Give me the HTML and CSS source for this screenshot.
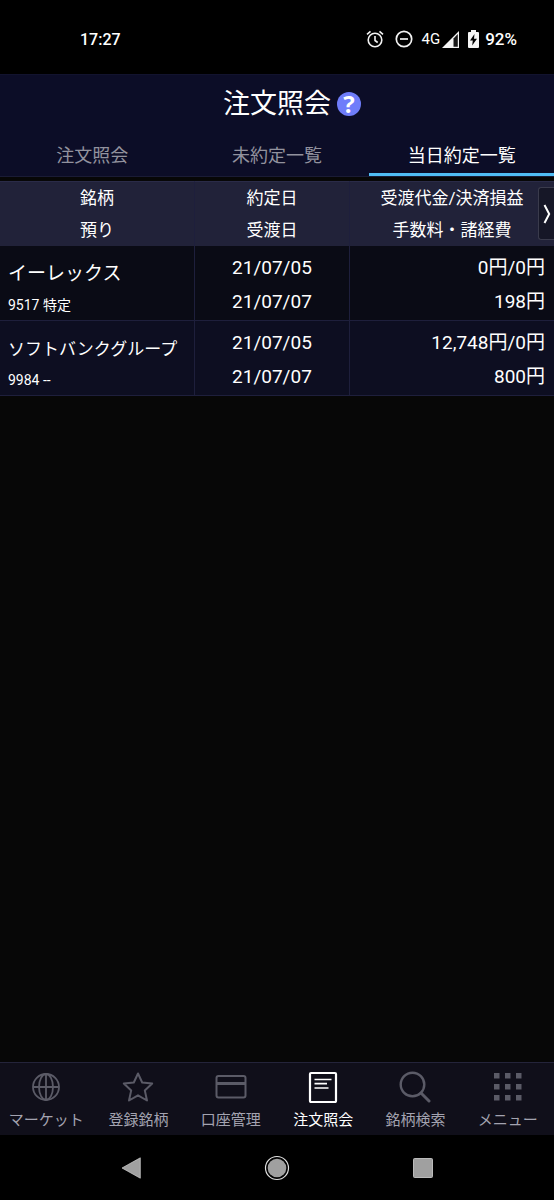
FILE: index.html
```html
<!DOCTYPE html>
<html lang="ja">
<head>
<meta charset="utf-8">
<meta name="viewport" content="width=device-width, initial-scale=1">
<title>注文照会</title>
<link rel="stylesheet" href="styles.css">
</head>
<body>
<div class="status-bar">
  <time class="status-time">17:27</time>
  <div class="status-icons">
    <svg class="icon-alarm" width="18" height="18" viewBox="0 0 18 18" fill="none" stroke="#f2f2f2" stroke-width="1.6"><circle cx="9" cy="10" r="6.8"/><path d="M9 6v4.500l2.700 2M1 4.300l3.500-3M17 4.300l-3.500-3"/></svg>
    <svg class="icon-dnd" width="18" height="18" viewBox="0 0 18 18" fill="none" stroke="#f2f2f2" stroke-width="1.700"><circle cx="9" cy="9" r="7.700"/><path d="M5 9h8"/></svg>
    <span class="network">4G</span>
    <svg class="icon-signal" width="17" height="17" viewBox="0 0 17 17"><path d="M0 17L17 0v17z" fill="#f5f5f5"/><path d="M11.500 7.500L15.800 3v12.700h-4.300z" fill="#181818"/></svg>
    <svg class="icon-battery" width="11" height="18" viewBox="0 0 11 18"><path d="M3 0h5v2h2q1 0 1 1v14q0 1-1 1H1q-1 0-1-1V3q0-1 1-1h2z" fill="#f5f5f5"/><path d="M6.500 4L2 10.500h2.800L4.200 15.500 9 8.700H6z" fill="#000"/></svg>
    <span class="battery-level">92%</span>
  </div>
</div>

<header class="app-header">
  <div class="title-row">
    <h1 class="title">注文照会</h1>
    <button class="help" type="button" aria-label="ヘルプ">?</button>
  </div>
  <nav class="tabs">
    <a class="tab" href="#orders">注文照会</a>
    <a class="tab" href="#open">未約定一覧</a>
    <a class="tab tab-active" href="#today" aria-current="page">当日約定一覧</a>
  </nav>
</header>

<main class="content">
  <table class="trades">
    <thead>
      <tr>
        <th class="col-name" scope="col">銘柄<br>預り</th>
        <th class="col-date" scope="col">約定日<br>受渡日</th>
        <th class="col-amount" scope="col">受渡代金/決済損益<br>手数料・諸経費</th>
      </tr>
    </thead>
    <tbody>
      <tr>
        <td class="cell-name"><div class="name">イーレックス</div><div class="code">9517 特定</div></td>
        <td class="cell-date">21/07/05<br>21/07/07</td>
        <td class="cell-amount">0円/0円<br>198円</td>
      </tr>
      <tr>
        <td class="cell-name"><div class="name name-long">ソフトバンクグループ</div><div class="code">9984 --</div></td>
        <td class="cell-date">21/07/05<br>21/07/07</td>
        <td class="cell-amount">12,748円/0円<br>800円</td>
      </tr>
    </tbody>
  </table>
  <button class="scroll-next" type="button" aria-label="次の列">
    <svg width="8" height="20" viewBox="0 0 8 20" fill="none" stroke="#fff" stroke-width="2"><path d="M1.500 1L6.200 10 1.500 19"/></svg>
  </button>
</main>

<nav class="bottom-nav">
  <a class="nav-item" href="#market">
    <svg width="32" height="32" viewBox="0 0 32 32" fill="none" stroke="currentColor" stroke-width="1.800"><circle cx="16" cy="16" r="13"/><ellipse cx="16" cy="16" rx="7" ry="13"/><path d="M16 3v26M3 16h26"/></svg>
    <span class="nav-label">マーケット</span>
  </a>
  <a class="nav-item" href="#watch">
    <svg width="32" height="32" viewBox="0 0 32 32" fill="none" stroke="currentColor" stroke-width="2" stroke-linejoin="round"><path d="M16 2.500l4.200 9 10 1-7.400 6.900 2.200 10.100-9-5.200-9 5.200 2.200-10.100-7.400-6.900 10-1z"/></svg>
    <span class="nav-label">登録銘柄</span>
  </a>
  <a class="nav-item" href="#account">
    <svg width="32" height="32" viewBox="0 0 32 32" fill="none" stroke="currentColor" stroke-width="2"><rect x="1.500" y="5" width="29" height="21.500" rx="2"/><path d="M2 12.500h28" stroke-width="3"/></svg>
    <span class="nav-label">口座管理</span>
  </a>
  <a class="nav-item nav-active" href="#orders" aria-current="page">
    <svg width="32" height="32" viewBox="0 0 32 32" fill="none" stroke="currentColor" stroke-width="2.200"><rect x="3" y="2" width="26" height="29" rx="1"/><path d="M7.500 8.500h17M7.500 12.700h12.500M7.500 17h14" stroke-width="1.700"/></svg>
    <span class="nav-label">注文照会</span>
  </a>
  <a class="nav-item" href="#search">
    <svg width="32" height="32" viewBox="0 0 32 32" fill="none" stroke="currentColor" stroke-width="2.400" stroke-linecap="round"><circle cx="13.500" cy="13.500" r="11.800"/><path d="M22 22l8 8" stroke-width="3"/></svg>
    <span class="nav-label">銘柄検索</span>
  </a>
  <a class="nav-item" href="#menu">
    <svg width="32" height="32" viewBox="0 0 32 32" fill="currentColor"><path d="M2 2h5.500v5.500H2zM13 2h5.500v5.500h-5.500zM24 2h5.500v5.500h-5.500zM2 13h5.500v5.500H2zM13 13h5.500v5.500h-5.500zM24 13h5.500v5.500h-5.500zM2 24h5.500v5.500H2zM13 24h5.500v5.500h-5.500zM24 24h5.500v5.500h-5.500z"/></svg>
    <span class="nav-label">メニュー</span>
  </a>
</nav>

<div class="system-nav">
  <button class="system-button" type="button" aria-label="戻る"><svg width="20" height="22" viewBox="0 0 20 22"><path d="M1 11L19.300.8v20.400z" fill="#a0a0a0" stroke="#d0d0d0" stroke-width=".7"/></svg></button>
  <button class="system-button" type="button" aria-label="ホーム"><svg width="26" height="26" viewBox="0 0 26 26"><circle cx="13" cy="13" r="11.500" fill="none" stroke="#e0e0e0" stroke-width="1.200"/><circle cx="13" cy="13" r="9.300" fill="#a0a0a0"/></svg></button>
  <button class="system-button" type="button" aria-label="最近使用したアプリ"><svg width="20" height="20" viewBox="0 0 20 20"><rect x=".5" y=".5" width="19" height="19" rx="1" fill="#a0a0a0" stroke="#bbb"/></svg></button>
</div>
</body>
</html>
```
FILE: styles.css
```css
* {
  box-sizing: border-box;
}

body {
  margin: 0;
  min-height: 100vh;
  display: flex;
  flex-direction: column;
  background: #070707;
  color: #fff;
  font-family: Roboto, "Noto Sans CJK JP", sans-serif;
}

a {
  text-decoration: none;
}

button {
  padding: 0;
  border: 0;
  background: none;
  color: inherit;
  font: inherit;
}

svg {
  display: block;
}

/* Device status bar */
.status-bar {
  display: flex;
  align-items: center;
  justify-content: space-between;
  height: 74px;
  padding: 4px 37px 0 80px;
  background: #000;
}

.status-time {
  font-size: 16px;
  font-weight: 500;
}

.status-icons {
  display: flex;
  align-items: center;
}

.icon-dnd {
  margin: 0 9px 0 11px;
}

.network {
  font-size: 15px;
  margin-right: 2px;
}

.icon-battery {
  margin: 0 6px 0 9px;
}

.battery-level {
  font-size: 17px;
  font-weight: 500;
}

/* Title and tabs */
.app-header {
  background: #0c0d27;
  border-top: 1px solid #12132e;
  border-bottom: 1px solid #1a1b35;
}

.title-row {
  display: flex;
  align-items: center;
  justify-content: center;
  gap: 6px;
  height: 58px;
  padding-left: 30px;
}

.title {
  margin: 0;
  font-size: 27px;
  font-weight: 400;
  line-height: 40px;
}

.help {
  width: 24px;
  height: 24px;
  border-radius: 50%;
  background: #6f7dfa;
  font-family: "Open Sans", sans-serif;
  font-size: 24px;
  font-weight: 700;
  line-height: 22px;
}

.tabs {
  display: grid;
  grid-template-columns: repeat(3, 1fr);
}

.tab {
  height: 43px;
  border-bottom: 3px solid transparent;
  color: #92929e;
  font-size: 18px;
  line-height: 46px;
  text-align: center;
}

.tab-active {
  border-color: #50bdf5;
  color: #fff;
}

/* Trade table */
.content {
  position: relative;
  flex: 1;
  padding-top: 4px;
}

.trades {
  width: 100%;
  border-collapse: separate;
  border-spacing: 0;
  table-layout: fixed;
}

.trades th,
.trades td {
  padding: 0;
  border-left: 1px solid #1e1f3c;
}

.trades th:first-child,
.trades td:first-child {
  border-left: 0;
}

.trades th {
  height: 65px;
  background: #212239;
  border-top: 1px solid #2a2b48;
  font-size: 17px;
  font-weight: 400;
  line-height: 32px;
}

.trades .col-name {
  width: 35%;
}

.trades .col-date {
  width: 28%;
}

.trades td {
  height: 75px;
  border-bottom: 1px solid #1e1f3c;
  background: #0a0b15;
}

.trades tbody tr:nth-child(2) td {
  background: #0d0e21;
}

.trades .cell-name {
  padding-left: 8px;
}

.name {
  padding-top: 8px;
  font-size: 19px;
  line-height: 36px;
  white-space: nowrap;
}

.name-long {
  font-size: 17px;
}

.code {
  font-size: 14px;
  line-height: 26px;
}

.trades .cell-date,
.trades .cell-amount {
  padding-top: 4px;
  font-size: 19px;
  line-height: 34px;
}

.cell-date {
  text-align: center;
}

.trades .cell-amount {
  padding-right: 9px;
  text-align: right;
}

.scroll-next {
  position: absolute;
  top: 10px;
  right: 0;
  display: flex;
  align-items: center;
  justify-content: center;
  width: 16px;
  height: 53px;
  border: 1px solid #3a3b4c;
  border-right: 0;
  border-radius: 3px 0 0 3px;
  background: #161727;
}

/* App navigation */
.bottom-nav {
  display: grid;
  grid-template-columns: repeat(6, 1fr);
  height: 73px;
  border-top: 1px solid #24243a;
  background: #100f1a;
}

.nav-item {
  display: flex;
  flex-direction: column;
  align-items: center;
  padding-top: 8px;
  color: #5b5b67;
}

.nav-label {
  color: #a3a3b0;
  font-size: 15px;
  line-height: 34px;
  white-space: nowrap;
}

.nav-active,
.nav-active .nav-label {
  color: #fff;
}

/* Device navigation */
.system-nav {
  display: flex;
  align-items: center;
  justify-content: space-around;
  height: 65px;
  padding: 0 60px;
  background: #000;
}
```
